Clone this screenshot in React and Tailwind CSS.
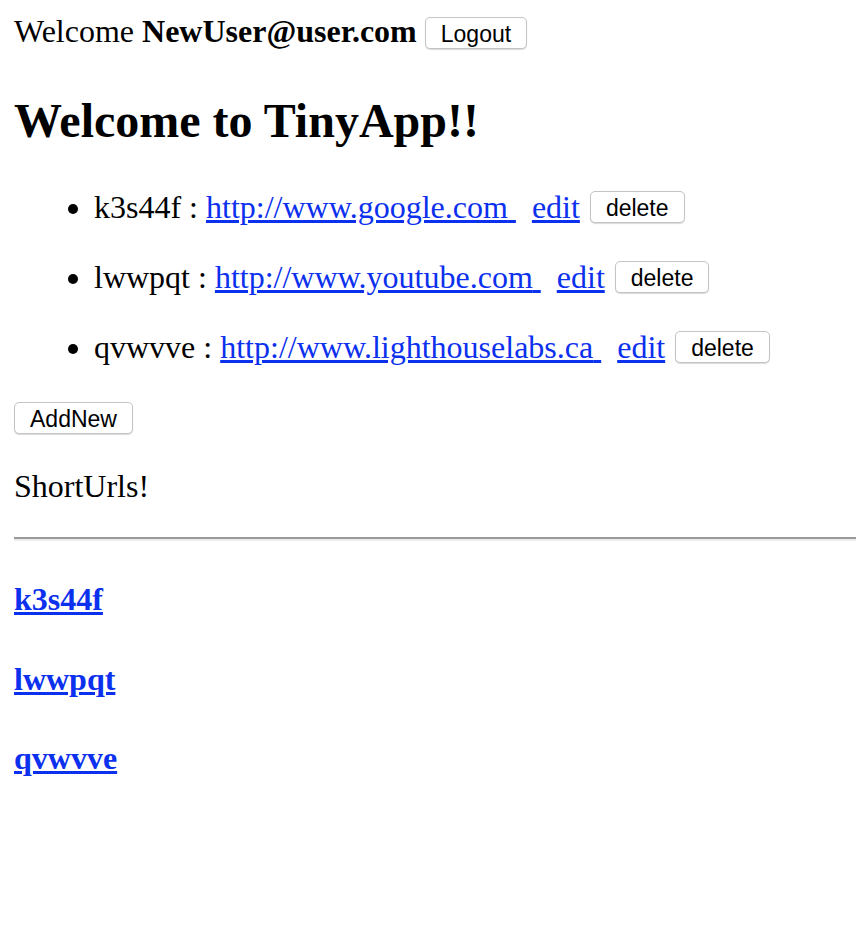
const urls = [
  { id: 'k3s44f', longURL: 'http://www.google.com' },
  { id: 'lwwpqt', longURL: 'http://www.youtube.com' },
  { id: 'qvwvve', longURL: 'http://www.lighthouselabs.ca' },
];

const btn =
  'h-[32px] px-[15px] pt-[2px] leading-[28px] bg-white text-black text-[23px] border border-[#c4c4c4] rounded-[5px] shadow-[0_1px_1px_rgba(0,0,0,0.15)] font-["Liberation_Sans",Arial,sans-serif]';

const link = 'text-[#0b30ee] underline';

export default function App() {
  return (
    <div className='min-h-[940px] bg-white text-black pl-[14px] pt-[13px] text-[32px] leading-[36px] font-["Liberation_Serif","Times_New_Roman",serif]'>
      {/* header */}
      <div className="h-[36px]">
        Welcome <b>NewUser@user.com</b>{' '}
        <button className={`${btn} inline-block align-baseline`}>Logout</button>
      </div>

      <h1 className="mt-[45px] text-[48px] leading-[54px] font-bold">Welcome to TinyApp!!</h1>

      <ul className="mt-[41px] pl-[80px] list-disc space-y-[34px]">
        {urls.map((u) => (
          <li key={u.id} className="h-[36px]">
            {u.id} : <a href="#" className={link}>{u.longURL}&nbsp;</a>
            <a href="#" className={`${link} ml-[16px]`}>edit</a>
            <button className={`${btn} inline-block align-[2px] ml-[10px]`}>delete</button>
          </li>
        ))}
      </ul>

      <button className={`${btn} block mt-[37px]`}>AddNew</button>

      <p className="mt-[34px]">ShortUrls!</p>

      <hr className="mt-[33px] border-t-2 border-b-2 border-t-[#9a9a9a] border-b-[#ececec]" />

      <div className="mt-[40px] space-y-[43.5px] font-bold">
        {urls.map((u) => (
          <div key={u.id}>
            <a href="#" className={link}>{u.id}</a>
          </div>
        ))}
      </div>
    </div>
  );
}
